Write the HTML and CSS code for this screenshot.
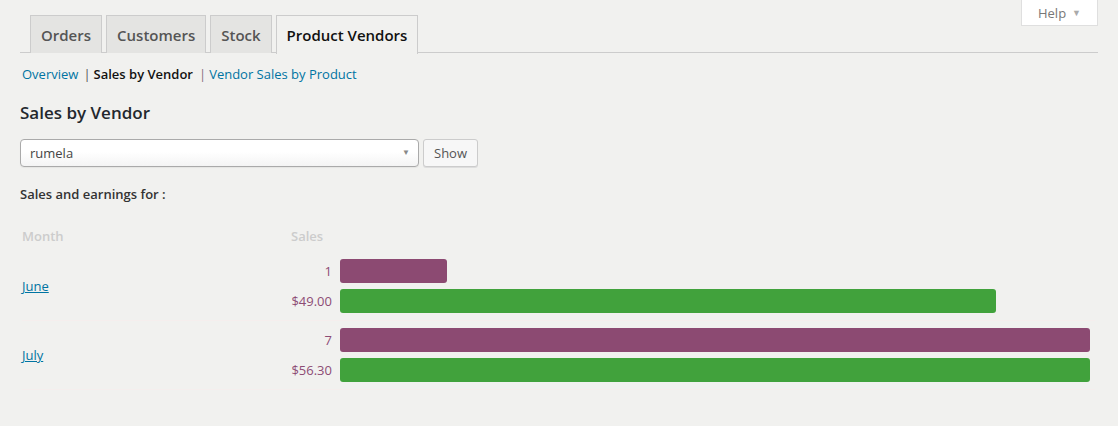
FILE: index.html
```html
<!DOCTYPE html>
<html>
<head>
<meta charset="utf-8">
<link rel="stylesheet" href="styles.css">
</head>
<body>
<div class="wrap">
  <a class="help-link" href="#">Help <span class="help-arrow">▼</span></a>
  <div class="tabs">
    <a class="tab" href="#">Orders</a>
    <a class="tab" href="#">Customers</a>
    <a class="tab" href="#">Stock</a>
    <a class="tab active" href="#">Product Vendors</a>
  </div>
  <div class="subnav">
    <a href="#">Overview</a><span class="sep">|</span><strong>Sales by Vendor</strong><span class="sep sep2">|</span><a href="#">Vendor Sales by Product</a>
  </div>
  <h3 class="title">Sales by Vendor</h3>
  <form class="filter">
    <div class="select"><span>rumela</span><span class="caret">▼</span></div>
    <button type="button" class="btn">Show</button>
  </form>
  <p class="for">Sales and earnings for :</p>
  <div class="report">
    <div class="row head">
      <div class="c-month">Month</div>
      <div class="c-sales">Sales</div>
    </div>
    <div class="row">
      <div class="c-month"><a href="#">June</a></div>
      <div class="c-data">
        <div class="line"><span class="val">1</span><div class="track"><div class="bar purple" style="width:14.27%"></div></div></div>
        <div class="line"><span class="val">$49.00</span><div class="track"><div class="bar green" style="width:87.5%"></div></div></div>
      </div>
    </div>
    <div class="row">
      <div class="c-month"><a href="#">July</a></div>
      <div class="c-data">
        <div class="line"><span class="val">7</span><div class="track"><div class="bar purple" style="width:100%"></div></div></div>
        <div class="line"><span class="val">$56.30</span><div class="track"><div class="bar green" style="width:100%"></div></div></div>
      </div>
    </div>
  </div>
</div>
</body>
</html>
```

FILE: styles.css
```css
* { box-sizing: border-box; }
html, body { margin: 0; padding: 0; }
body {
  background: #f1f1ef;
  font-family: "Open Sans", "Liberation Sans", sans-serif;
  font-size: 13px;
  color: #444;
  width: 1118px;
  height: 426px;
  overflow: hidden;
}
.wrap {
  position: relative;
  padding: 0 20px 0 20px;
}
.help-link {
  position: absolute;
  top: -1px;
  right: 20px;
  width: 77px;
  height: 27px;
  background: #fff;
  border: 1px solid #dfdfdf;
  border-top: 0;
  color: #777;
  text-decoration: none;
  font-size: 13px;
  display: flex;
  align-items: center;
  justify-content: center;
  gap: 6px;
  padding-top: 1px;
}
.help-arrow { font-size: 9px; color: #aaa; }
.tabs {
  display: flex;
  gap: 4px;
  padding-left: 10px;
  padding-top: 15px;
  border-bottom: 1px solid #ccc;
  height: 53px;
}
.tab {
  display: flex;
  align-items: center;
  height: 38px;
  padding: 0 10px;
  border: 1px solid #ccc;
  border-bottom: 0;
  background: #e4e4e2;
  color: #555;
  font-size: 15px;
  font-weight: 600;
  text-decoration: none;
}
.tab.active {
  background: #f1f1ef;
  color: #111;
  height: 39px;
  margin-bottom: -1px;
  position: relative;
}
.subnav {
  margin-top: 12px;
  padding-left: 2px;
  font-size: 13px;
  line-height: 18px;
  color: #333;
}
.subnav a { color: #0074a2; text-decoration: none; }
.subnav strong { color: #111; font-weight: 600; }
.sep { color: #555; margin: 0 3px 0 5px; }
.sep2 { color: #8a6f7f; margin: 0 3px 0 6px; }
.title {
  margin: 18px 0 0 0;
  font-size: 17px;
  font-weight: 600;
  color: #23282d;
  line-height: 24px;
}
.filter {
  display: flex;
  gap: 4px;
  margin-top: 14px;
}
.select {
  width: 399px;
  height: 28px;
  border: 1px solid #aaa;
  border-radius: 4px;
  background: linear-gradient(#fff 0%, #fff 45%, #f4f4f4 100%);
  display: flex;
  align-items: center;
  justify-content: space-between;
  padding: 0 8px 0 9px;
  color: #444;
  font-size: 13px;
  box-shadow: 0 1px 1px rgba(0,0,0,0.05);
}
.caret { font-size: 8px; color: #888; margin-top: -3px; }
.btn {
  height: 28px;
  width: 55px;
  border: 1px solid #ccc;
  border-radius: 3px;
  background: #f7f7f7;
  color: #555;
  font-family: inherit;
  font-size: 13px;
  padding: 0;
  box-shadow: 0 1px 0 #ddd;
}
.for {
  margin: 18px 0 0 0;
  font-weight: 600;
  color: #333;
  font-size: 13px;
  line-height: 18px;
}
.report {
  margin-top: 24px;
  width: 1075px;
  padding-left: 2px;
}
.row {
  display: flex;
  align-items: center;
  border-bottom: 1px solid #f5eeed;
  padding: 7px 0 7px 0;
}
.row.head {
  border-bottom: 0;
  padding: 0 0 7px 0;
  color: #ccc;
  font-weight: 600;
  line-height: 18px;
}
.c-month { width: 269px; flex: none; }
.c-month a { color: #0074a2; text-decoration: underline; }
.c-data {
  flex: 1;
  display: flex;
  flex-direction: column;
  gap: 6px;
}
.line {
  display: flex;
  align-items: center;
  gap: 8px;
}
.val {
  width: 41px;
  text-align: right;
  color: #8d4c75;
  font-size: 13px;
}
.track { width: 750px; }
.bar {
  height: 24px;
  border-radius: 3px;
}
.purple { background: #8c4a72; }
.green { background: #41a23c; }
```
